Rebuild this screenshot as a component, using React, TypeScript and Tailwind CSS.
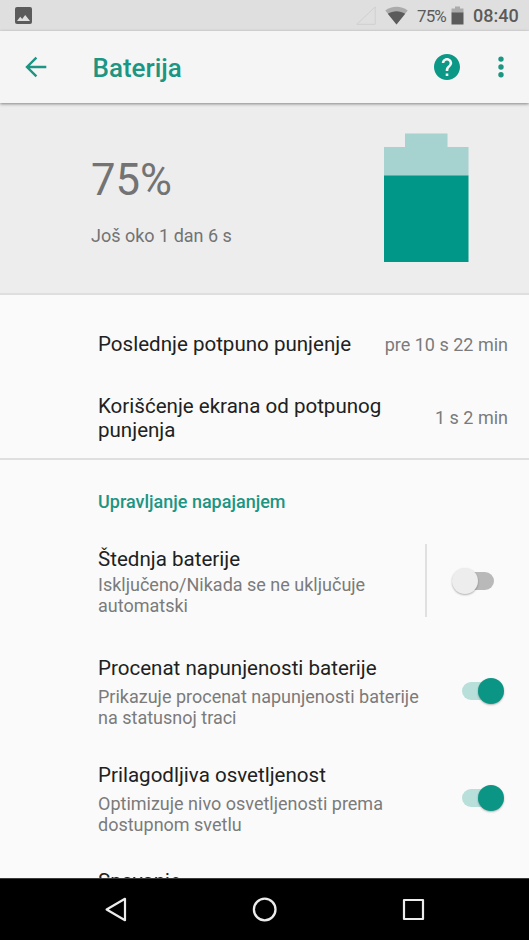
import clsx from 'clsx'

type ToggleProps = {
  label: string
  checked?: boolean
}

type PreferenceTextProps = {
  title: string
  summary: string[]
  summaryClassName?: string
}

function StatusBar() {
  return (
    <div className="flex h-[31px] shrink-0 items-center bg-[#dfdfdf] pr-[10px] pl-[15px] text-[#5b5b5b]">
      <svg className="h-[17px] w-[17px]" viewBox="0 0 17 17">
        <rect width="17" height="17" rx="2" fill="#5b5b5b" />
        <path d="M2 14 5.2 9.8 7.2 12 10.2 8 15 14Z" fill="#dfdfdf" />
      </svg>
      <svg className="ml-auto h-[19px] w-[20px]" viewBox="0 0 20 19">
        <path d="M.8 18.3H19.2V.8Z" fill="none" stroke="#cfcfcf" />
      </svg>
      <svg className="ml-[9px] h-[19px] w-[23px]" viewBox="0 0 23 19">
        <path d="M.3 4.6C6.8-.4 16.2-.4 22.7 4.6L11.5 18.5Z" fill="#ababab" />
        <path d="M2.8 7.7C8 4.3 15 4.3 20.2 7.7L11.5 18.5Z" fill="#5b5b5b" />
      </svg>
      <span className="ml-[9px] w-[30px] text-[17px] leading-[20px] tracking-[-0.9px] whitespace-nowrap">
        75%
      </span>
      <svg className="ml-[4px] h-[19px] w-[13px]" viewBox="0 0 13 19">
        <path d="M4 .5H9V2.5H12.5V7H.5V2.5H4Z" fill="#ababab" />
        <path d="M.5 6.5H12.5V18.5H.5Z" fill="#5b5b5b" />
      </svg>
      <span className="ml-[9px] w-[46px] text-[18px] leading-[20px] font-medium whitespace-nowrap">
        08:40
      </span>
    </div>
  )
}

function AppBar() {
  return (
    <header className="relative z-10 flex h-[72px] shrink-0 items-center bg-[#f5f5f5] pr-[25px] pl-[25px] text-[#1c9583] shadow-[0_1px_3px_rgba(0,0,0,0.45)]">
      <button type="button" aria-label="Nazad">
        <svg className="h-[22px] w-[22px]" viewBox="0 0 22 22" fill="none" stroke="currentColor" strokeWidth="2.4">
          <path d="M21.3 11H2.5M11.4 1.7 2 11 11.4 20.3" />
        </svg>
      </button>
      <h1 className="ml-[45.5px] pt-px text-[26px] leading-[30px] font-medium">Baterija</h1>
      <button type="button" aria-label="Pomoć" className="ml-auto">
        <svg className="h-[26px] w-[26px]" viewBox="2 2 20 20" fill="#0b9886">
          <path d="M12 2C6.48 2 2 6.48 2 12s4.48 10 10 10 10-4.48 10-10S17.52 2 12 2zm1 17h-2v-2h2v2zm2.07-7.75-.9.92C13.45 12.9 13 13.5 13 15h-2v-.5c0-1.1.45-2.1 1.17-2.83l1.24-1.26c.37-.36.59-.86.59-1.41 0-1.1-.9-2-2-2s-2 .9-2 2H8c0-2.21 1.79-4 4-4s4 1.79 4 4c0 .88-.36 1.68-.93 2.25z" />
        </svg>
      </button>
      <button type="button" aria-label="Još opcija" className="ml-[38px]">
        <svg className="h-[22px] w-[6px]" viewBox="0 0 6 22" fill="currentColor">
          <circle cx="3" cy="3.1" r="2.7" />
          <circle cx="3" cy="11" r="2.7" />
          <circle cx="3" cy="18.8" r="2.7" />
        </svg>
      </button>
    </header>
  )
}

function BatteryHeader() {
  return (
    <section className="flex h-[192px] shrink-0 items-start justify-between border-b-2 border-[#dedede] bg-[#ededed] pr-[60px] pl-[91px] text-[#737373]">
      <div className="pt-[52px]">
        <p className="text-[43.6px] leading-[52px]">75%</p>
        <p className="mt-[18px] text-[18px] leading-[21px]">Još oko 1 dan 6 s</p>
      </div>
      <svg className="mt-[30px] h-[129px] w-[85px]" viewBox="0 0 85 129">
        <path d="M21 .5H63.5V14H84.5V43H0V14H21Z" fill="#a6d2cf" />
        <path d="M0 42.5H84.5V129H0Z" fill="#009788" />
      </svg>
    </section>
  )
}

function Toggle({ label, checked = false }: ToggleProps) {
  return (
    <button
      type="button"
      role="switch"
      aria-checked={checked}
      aria-label={label}
      className={clsx('flex w-[43px] shrink-0 items-center', checked ? 'h-[28px] pb-[2px]' : 'h-[27px]')}
    >
      <span
        className={clsx(
          'flex h-[18px] items-center rounded-full',
          checked ? 'ml-px w-[33px] justify-end bg-[#b8dfda]' : 'ml-[9px] w-[33px] justify-start bg-[#b9b9b9]',
        )}
      >
        <span
          className={clsx(
            'h-[26px] w-[26px] shrink-0 rounded-full shadow-[0_1px_2px_rgba(0,0,0,0.3)]',
            checked ? '-mr-[9px] bg-[#0b9584]' : '-ml-[9px] bg-[#ededed]',
          )}
        />
      </span>
    </button>
  )
}

function PreferenceText({ title, summary, summaryClassName }: PreferenceTextProps) {
  return (
    <div className="whitespace-nowrap">
      <h3 className="text-[20.55px] leading-[24px] text-[#212121]">{title}</h3>
      <div className={clsx('text-[18px] leading-[21px] text-[#7b7b7b]', summaryClassName)}>
        {summary.map((line) => (
          <p key={line}>{line}</p>
        ))}
      </div>
    </div>
  )
}

function NavigationBar() {
  return (
    <nav className="flex h-[62px] shrink-0 items-center justify-between border-t border-[#3c3c3c] bg-black pr-[104px] pl-[105px]">
      <svg className="h-[26px] w-[23px]" viewBox="0 0 23 26" fill="none" stroke="#ececec" strokeWidth="2.2" strokeLinejoin="round">
        <path d="M20 1.8V23.2L1.6 12.5Z" />
      </svg>
      <svg className="h-[26px] w-[26px]" viewBox="0 0 26 26" fill="none" stroke="#ececec" strokeWidth="2.3">
        <circle cx="12.7" cy="12.5" r="10.8" />
      </svg>
      <svg className="h-[26px] w-[23px]" viewBox="0 0 23 26" fill="none" stroke="#ececec" strokeWidth="2.2" strokeLinejoin="round">
        <path d="M2 3H21V22H2Z" />
      </svg>
    </nav>
  )
}

export default function App() {
  return (
    <div className="flex h-[940px] w-[529px] flex-col overflow-hidden bg-[#fafafa] font-['Roboto',sans-serif]">
      <StatusBar />
      <AppBar />
      <main className="flex min-h-0 flex-1 flex-col overflow-hidden">
        <BatteryHeader />

        <section className="h-[165px] shrink-0 border-b-2 border-[#dfdfdf] pt-[37px] pr-[21px] pl-[98px]">
          <div className="flex items-center justify-between whitespace-nowrap">
            <p className="text-[20.55px] leading-[24px] text-[#212121]">Poslednje potpuno punjenje</p>
            <p className="pt-px text-[18px] leading-[21px] text-[#7b7b7b]">pre 10 s 22 min</p>
          </div>
          <div className="mt-[38px] flex items-center justify-between whitespace-nowrap">
            <p className="text-[20.55px] leading-[24px] text-[#212121]">
              Korišćenje ekrana od potpunog
              <br />
              punjenja
            </p>
            <p className="pb-[2px] text-[18px] leading-[21px] text-[#7b7b7b]">1 s 2 min</p>
          </div>
        </section>

        <section className="shrink-0 pr-[25px] pl-[98px]">
          <h2 className="mt-[32px] text-[18px] leading-[20px] font-medium text-[#1c9583]">
            Upravljanje napajanjem
          </h2>
          <div className="mt-[32px] flex h-[73px] items-center justify-between">
            <div className="pt-[2px]">
              <PreferenceText
                title="Štednja baterije"
                summary={['Isključeno/Nikada se ne uključuje', 'automatski']}
                summaryClassName="pt-[3px]"
              />
            </div>
            <div className="flex h-full items-center border-l-2 border-[#e0e0e0] pr-[9px] pl-[25px]">
              <Toggle label="Štednja baterije" />
            </div>
          </div>
          <div className="mt-[39px] flex items-center justify-between">
            <PreferenceText
              title="Procenat napunjenosti baterije"
              summary={['Prikazuje procenat napunjenosti baterije', 'na statusnoj traci']}
              summaryClassName="pt-[6px]"
            />
            <Toggle label="Procenat napunjenosti baterije" checked />
          </div>
          <div className="mt-[35px] flex items-center justify-between">
            <PreferenceText
              title="Prilagodljiva osvetljenost"
              summary={['Optimizuje nivo osvetljenosti prema', 'dostupnom svetlu']}
              summaryClassName="pt-[6px]"
            />
            <Toggle label="Prilagodljiva osvetljenost" checked />
          </div>
          <h3 className="mt-[34px] text-[20.55px] leading-[24px] text-[#212121]">Spavanje</h3>
        </section>
      </main>
      <NavigationBar />
    </div>
  )
}
